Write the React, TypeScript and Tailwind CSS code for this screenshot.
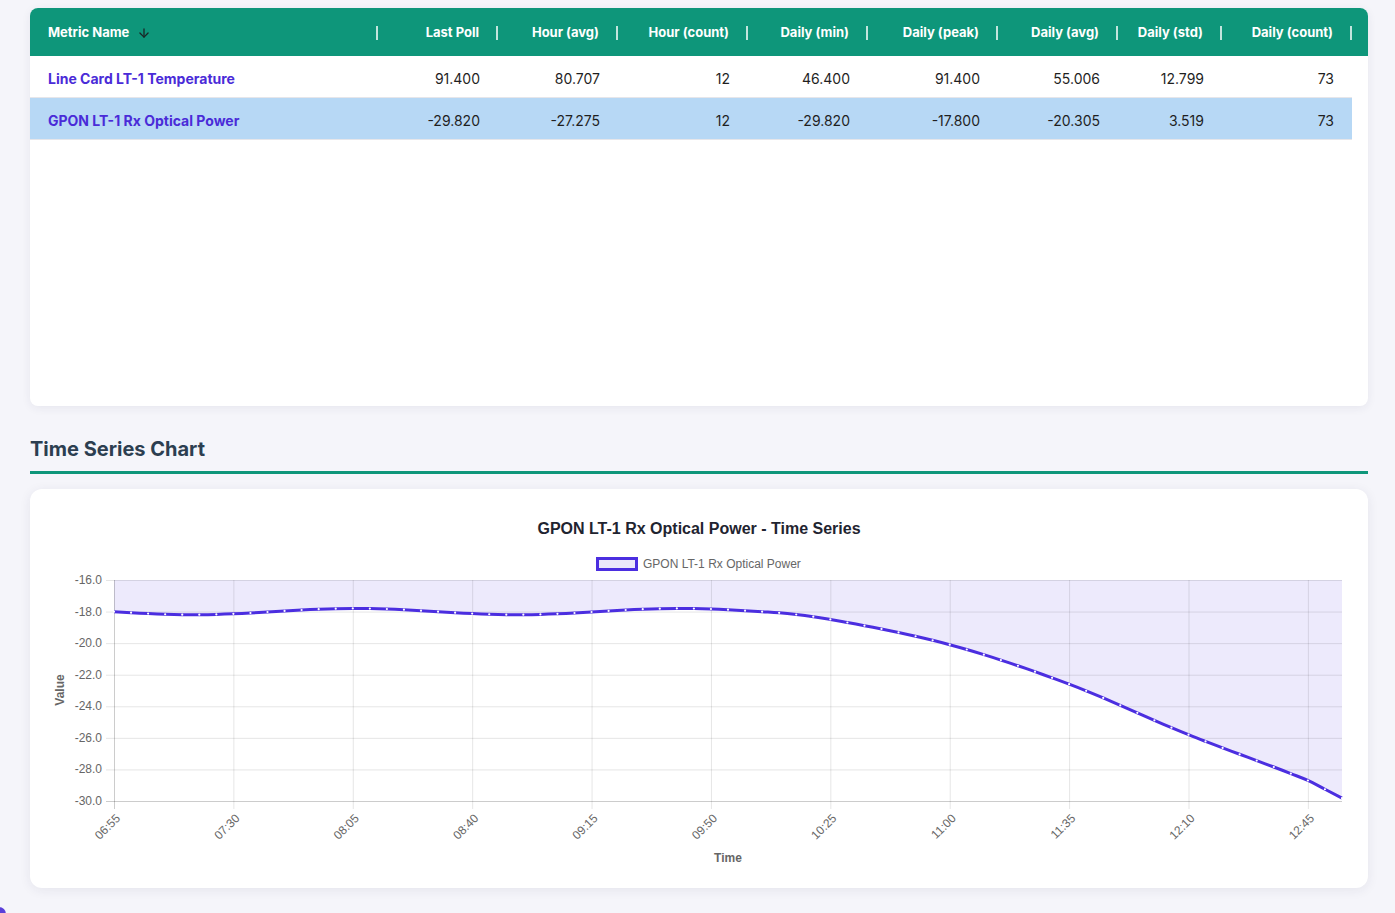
import React from 'react';
import { ArrowDown } from 'lucide-react';

interface MetricRow {
  name: string;
  values: string[];
  selected?: boolean;
}

const columns = [
  'Last Poll',
  'Hour (avg)',
  'Hour (count)',
  'Daily (min)',
  'Daily (peak)',
  'Daily (avg)',
  'Daily (std)',
  'Daily (count)',
];

const rows: MetricRow[] = [
  {
    name: 'Line Card LT-1 Temperature',
    values: ['91.400', '80.707', '12', '46.400', '91.400', '55.006', '12.799', '73'],
  },
  {
    name: 'GPON LT-1 Rx Optical Power',
    values: ['-29.820', '-27.275', '12', '-29.820', '-17.800', '-20.305', '3.519', '73'],
    selected: true,
  },
];

const gridCols = 'grid grid-cols-[348px_120px_120px_130px_120px_130px_120px_104px_130px]';

// chart geometry, in card coordinates
const PL = 84;
const PR = 1312;
const PT = 91;
const PB = 312;
const Y_MAX = -16;
const Y_MIN = -30;

const xAt = (t: number) => PL + (t / 360) * (PR - PL);
const yAt = (v: number) => PT + ((Y_MAX - v) / (Y_MAX - Y_MIN)) * (PB - PT);

// drop after ~10:10, knots as [minutes since 06:55, offset]
const knots: [number, number][] = [
  [170, 0],
  [190, 0],
  [210, 0.5],
  [245, 2.1],
  [280, 4.6],
  [315, 7.8],
  [350, 10.7],
  [360, 11.82],
  [380, 13.5],
];

function dropAt(t: number): number {
  for (let i = 1; i < knots.length - 2; i++) {
    const [t1, v1] = knots[i];
    const [t2, v2] = knots[i + 1];
    if (t >= t1 && t <= t2) {
      const [t0, v0] = knots[i - 1];
      const [t3, v3] = knots[i + 2];
      const s = (t - t1) / (t2 - t1);
      const m1 = ((v2 - v0) / (t2 - t0)) * (t2 - t1);
      const m2 = ((v3 - v1) / (t3 - t1)) * (t2 - t1);
      const s2 = s * s;
      const s3 = s2 * s;
      return (
        (2 * s3 - 3 * s2 + 1) * v1 +
        (s3 - 2 * s2 + s) * m1 +
        (-2 * s3 + 3 * s2) * v2 +
        (s3 - s2) * m2
      );
    }
  }
  return 0;
}

const series = Array.from({ length: 73 }, (_, i) => {
  const t = i * 5;
  if (t <= 190) return -18 + 0.2 * Math.sin((2 * Math.PI * (t - 47)) / 95);
  return -18 - dropAt(t);
});
series[72] = -29.82;

const pts = series.map((v, i) => [xAt(i * 5), yAt(v)] as [number, number]);

function smoothPath(p: [number, number][]): string {
  let d = `M${p[0][0].toFixed(2)},${p[0][1].toFixed(2)}`;
  const k = 0.2;
  for (let i = 0; i < p.length - 1; i++) {
    const p0 = p[i - 1] ?? p[i];
    const p1 = p[i];
    const p2 = p[i + 1];
    const p3 = p[i + 2] ?? p2;
    const c1x = p1[0] + (p2[0] - p0[0]) * k;
    const c1y = p1[1] + (p2[1] - p0[1]) * k;
    const c2x = p2[0] - (p3[0] - p1[0]) * k;
    const c2y = p2[1] - (p3[1] - p1[1]) * k;
    d += ` C${c1x.toFixed(2)},${c1y.toFixed(2)} ${c2x.toFixed(2)},${c2y.toFixed(2)} ${p2[0].toFixed(2)},${p2[1].toFixed(2)}`;
  }
  return d;
}

const linePath = smoothPath(pts);
const fillPath = `${linePath} L${PR},${PT} L${PL},${PT} Z`;

const xTicks = ['06:55', '07:30', '08:05', '08:40', '09:15', '09:50', '10:25', '11:00', '11:35', '12:10', '12:45'];
const yTicks = [-16, -18, -20, -22, -24, -26, -28, -30];

const chartFont = '"Liberation Sans", Arial, Helvetica, sans-serif';

function TimeSeriesChart() {
  return (
    <svg width="1338" height="399" viewBox="0 0 1338 399" style={{ fontFamily: chartFont }}>
      <text x="669" y="45" textAnchor="middle" fontSize="16" fontWeight="700" fill="#1f2430">
        GPON LT-1 Rx Optical Power - Time Series
      </text>

      {/* legend */}
      <rect x="567.5" y="69.5" width="39" height="11" fill="#ebe8fa" stroke="#4b2ee0" strokeWidth="3" />
      <text x="613" y="79" fontSize="12" fill="#666">
        GPON LT-1 Rx Optical Power
      </text>

      {/* fill above the line */}
      <path d={fillPath} fill="rgba(75,46,224,0.1)" />

      {/* grid */}
      {yTicks.map((v, i) => (
        <line
          key={v}
          x1={PL - 8}
          x2={PR}
          y1={yAt(v) + 0.5}
          y2={yAt(v) + 0.5}
          stroke={i === yTicks.length - 1 ? 'rgba(0,0,0,0.2)' : 'rgba(0,0,0,0.1)'}
        />
      ))}
      {xTicks.map((_, i) => (
        <line
          key={i}
          x1={xAt(i * 35) + 0.5}
          x2={xAt(i * 35) + 0.5}
          y1={PT}
          y2={PB + 8}
          stroke={i === 0 ? 'rgba(0,0,0,0.2)' : 'rgba(0,0,0,0.1)'}
        />
      ))}

      {/* y labels */}
      {yTicks.map((v) => (
        <text key={v} x={PL - 12} y={yAt(v) + 4} textAnchor="end" fontSize="12" fill="#666">
          {v.toFixed(1)}
        </text>
      ))}
      <text
        transform={`translate(34, 201) rotate(-90)`}
        textAnchor="middle"
        fontSize="12"
        fontWeight="700"
        fill="#666"
      >
        Value
      </text>

      {/* x labels */}
      {xTicks.map((label, i) => (
        <text
          key={label}
          transform={`translate(${xAt(i * 35) + 7}, ${PB + 18}) rotate(-45)`}
          textAnchor="end"
          fontSize="12"
          fill="#666"
        >
          {label}
        </text>
      ))}
      <text x={(PL + PR) / 2} y="373" textAnchor="middle" fontSize="12" fontWeight="700" fill="#666">
        Time
      </text>

      {/* line */}
      <path d={linePath} fill="none" stroke="#4b2ee0" strokeWidth="3" strokeLinejoin="round" />
      {pts.map(([x, y], i) => (
        <circle key={i} cx={x} cy={y} r="1.1" fill="#ffffff" />
      ))}
    </svg>
  );
}

export default function App() {
  return (
    <div
      className="min-h-[913px] bg-[#f5f5fa] pt-[8px] pb-[25px] pl-[30px] pr-[27px]"
      style={{ fontFamily: 'Inter, "Noto Sans", sans-serif' }}
    >
      {/* Metrics table */}
      <div className="h-[398px] bg-white rounded-lg overflow-hidden shadow-[0_2px_10px_rgba(40,40,80,0.07)]">
        <div className="h-[48px] bg-[#0e967a] flex">
          <div className={`${gridCols} h-full pt-[2px]`}>
            <div className="flex items-center pl-[18px] text-[13px] font-bold text-white">
              <span>Metric Name</span>
              <ArrowDown className="ml-[8px] w-[14px] h-[14px] text-[#1a2626]" strokeWidth={2.2} />
              <span className="ml-auto w-[2px] h-[14px] bg-white/75" />
            </div>
            {columns.map((col) => (
              <div key={col} className="flex items-center justify-end text-[13px] font-bold text-white">
                <span>{col}</span>
                <span className="ml-[17px] w-[2px] h-[14px] bg-white/75" />
              </div>
            ))}
          </div>
        </div>

        {rows.map((row) => (
          <div
            key={row.name}
            className={`${gridCols} h-[42px] w-[1322px] pt-[3px] border-b border-[#e6e6ea] ${row.selected ? 'bg-[#b7d8f5]' : 'bg-white'}`}
          >
            <div className="flex items-center pl-[18px] text-[14px] font-bold text-[#4a2bd8]">
              {row.name}
            </div>
            {row.values.map((v, i) => (
              <div key={i} className="flex items-center justify-end pr-[18px] text-[14px] text-[#1f1f1f]">
                {v}
              </div>
            ))}
          </div>
        ))}
      </div>

      {/* Heading */}
      <h2 className="mt-[29px] pb-[8px] border-b-[3px] border-[#0e967a] text-[20px] leading-[28px] font-bold text-[#2c3e50]">
        Time Series Chart
      </h2>

      {/* Chart card */}
      <div className="mt-[15px] h-[399px] bg-white rounded-xl overflow-hidden shadow-[0_2px_12px_rgba(40,40,80,0.08)]">
        <TimeSeriesChart />
      </div>

      <div className="fixed left-[-8px] bottom-[-8px] w-[14px] h-[14px] rounded-full bg-[#5b3fd9]" />
    </div>
  );
}
